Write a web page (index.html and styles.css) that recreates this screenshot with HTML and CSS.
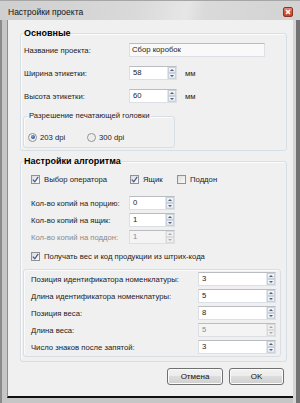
FILE: index.html
```html
<!DOCTYPE html>
<html lang="ru">
<head>
    <meta charset="UTF-8">
    <meta name="viewport" content="width=device-width, initial-scale=1.0">
    <title>Настройки проекта</title>
    <link rel="stylesheet" href="styles.css">
</head>
<body>
    <div class="window">
        <div class="titlebar">
            <span class="title">Настройки проекта</span>
            <span class="close">
                <svg width="6" height="6" viewBox="0 0 6 6"><path d="M1 1 L5 5 M5 1 L1 5" stroke="#fff" stroke-width="1.6"/></svg>
            </span>
        </div>

        <div class="client">
            <fieldset class="group group-main">
                <legend>Основные</legend>

                <div class="row">
                    <label class="label">Название проекта:</label>
                    <div class="textbox">Сбор коробок</div>
                </div>
                <div class="row">
                    <label class="label">Ширина этикетки:</label>
                    <div class="spin"><span class="value">58</span><span class="arrows"><span class="up"></span><span class="down"></span></span></div>
                    <span class="unit">мм</span>
                </div>
                <div class="row">
                    <label class="label">Высота этикетки:</label>
                    <div class="spin"><span class="value">60</span><span class="arrows"><span class="up"></span><span class="down"></span></span></div>
                    <span class="unit">мм</span>
                </div>

                <fieldset class="group group-dpi">
                    <legend>Разрешение печатающей головки</legend>
                    <div class="radios">
                        <span class="radio-item first"><span class="radio checked"></span>203 dpi</span>
                        <span class="radio-item"><span class="radio"></span>300 dpi</span>
                    </div>
                </fieldset>
            </fieldset>

            <fieldset class="group group-algo">
                <legend>Настройки алгоритма</legend>

                <div class="checks">
                    <span class="check-item w-operator"><span class="check checked"><svg width="7" height="7" viewBox="0 0 7 7"><path d="M0.8 3.6 L2.8 5.8 L6.2 0.9" fill="none" stroke="#4a5d90" stroke-width="1.3"/></svg></span>Выбор оператора</span>
                    <span class="check-item w-box"><span class="check checked"><svg width="7" height="7" viewBox="0 0 7 7"><path d="M0.8 3.6 L2.8 5.8 L6.2 0.9" fill="none" stroke="#4a5d90" stroke-width="1.3"/></svg></span>Ящик</span>
                    <span class="check-item"><span class="check"></span>Поддон</span>
                </div>

                <div class="row copies">
                    <label class="label">Кол-во копий на порцию:</label>
                    <div class="spin small"><span class="value">0</span><span class="arrows"><span class="up"></span><span class="down"></span></span></div>
                </div>
                <div class="row copies">
                    <label class="label">Кол-во копий на ящик:</label>
                    <div class="spin small"><span class="value">1</span><span class="arrows"><span class="up"></span><span class="down"></span></span></div>
                </div>
                <div class="row copies">
                    <label class="label disabled">Кол-во копий на поддон:</label>
                    <div class="spin small disabled"><span class="value">1</span><span class="arrows"><span class="up"></span><span class="down"></span></span></div>
                </div>

                <div class="checks single">
                    <span class="check-item"><span class="check checked"><svg width="7" height="7" viewBox="0 0 7 7"><path d="M0.8 3.6 L2.8 5.8 L6.2 0.9" fill="none" stroke="#4a5d90" stroke-width="1.3"/></svg></span>Получать вес и код продукции из штрих-кода</span>
                </div>

                <fieldset class="group group-barcode">
                    <div class="row bc">
                        <label class="label">Позиция идентификатора номенклатуры:</label>
                        <div class="spin wide"><span class="value">3</span><span class="arrows"><span class="up"></span><span class="down"></span></span></div>
                    </div>
                    <div class="row bc">
                        <label class="label">Длина идентификатора номенклатуры:</label>
                        <div class="spin wide"><span class="value">5</span><span class="arrows"><span class="up"></span><span class="down"></span></span></div>
                    </div>
                    <div class="row bc">
                        <label class="label">Позиция веса:</label>
                        <div class="spin wide"><span class="value">8</span><span class="arrows"><span class="up"></span><span class="down"></span></span></div>
                    </div>
                    <div class="row bc">
                        <label class="label">Длина веса:</label>
                        <div class="spin wide disabled"><span class="value">5</span><span class="arrows"><span class="up"></span><span class="down"></span></span></div>
                    </div>
                    <div class="row bc">
                        <label class="label">Число знаков после запятой:</label>
                        <div class="spin wide"><span class="value">3</span><span class="arrows"><span class="up"></span><span class="down"></span></span></div>
                    </div>
                </fieldset>
            </fieldset>

            <div class="buttons">
                <button type="button" class="btn btn-cancel">Отмена</button>
                <button type="button" class="btn btn-ok">OK</button>
            </div>
        </div>
    </div>
</body>
</html>
```

FILE: styles.css
```css
* {
    margin: 0;
    padding: 0;
    box-sizing: border-box;
}

body {
    width: 300px;
    height: 403px;
    overflow: hidden;
    font-family: 'Liberation Sans', Arial, sans-serif;
    font-size: 7.7px;
    color: #1b1b1b;
    background: #9c9c9c;
}

/* window frame */
.window {
    width: 300px;
    height: 403px;
    display: flex;
    flex-direction: column;
    padding: 0 7px 5px 7px;
    background: linear-gradient(to right,
        #8b8b8b 0, #8b8b8b 2px,
        #c6c6c6 2px, #c6c6c6 293px,
        #d6d6d6 293px, #d6d6d6 296px,
        #737373 296px, #737373 300px);
}

.titlebar {
    height: 20px;
    margin: 0 -7px;
    padding: 0 7px 0 8px;
    display: flex;
    align-items: center;
    justify-content: space-between;
    background: linear-gradient(100deg, #cfcfcf 0%, #d9d9d9 45%, #e6e6e6 62%, #dadada 68%, #d2d2d2 100%);
    border-top: 1px solid #a6a6a6;
}

.title {
    font-size: 8.5px;
    color: #111;
    margin-top: 3px;
}

.close {
    width: 10px;
    height: 10px;
    margin-top: 2px;
    display: flex;
    align-items: center;
    justify-content: center;
    border: 1px solid #8d3322;
    border-radius: 2px;
    background: linear-gradient(#e8897a 0%, #d6573f 50%, #c4401f 100%);
}

.client {
    flex: 1;
    display: flex;
    flex-direction: column;
    background: #f0f0f0;
    border-left: 1px solid #8e8e8e;
    border-bottom: 2px solid #111;
}

/* group boxes */
.group {
    border: 1px solid #d5dfe5;
    border-radius: 3px;
    box-shadow: inset 1px 1px 0 #fbfbfb;
}

.group legend {
    font-size: 9px;
    font-weight: bold;
    line-height: 11px;
    color: #000;
}

.group-main {
    margin: 8px 6px 0 12px;
    padding: 4px 3px 2px 3px;
}

.group-algo {
    margin: 5px 6px 0 12px;
    padding: 7px 3px 4px 3px;
}

.group-dpi {
    width: 152px;
    margin: -1px 0 0 -1px;
    padding: 11px 0 5px 4px;
}

.group-dpi legend {
    font-size: 7.7px;
    font-weight: normal;
    line-height: 10px;
    padding: 0 1px;
    color: #1b1b1b;
}

.group-barcode {
    width: 258px;
    margin: 8px 0 0 -1px;
    padding: 2px 4px 2px 7px;
}

/* rows */
.row {
    display: flex;
    align-items: center;
    height: 14px;
    margin-bottom: 9px;
}

.label {
    flex: 0 0 105px;
}

.label.disabled {
    color: #8a8a8a;
}

.copies {
    margin: 0 0 3px 7px;
}

.copies .label {
    flex-basis: 98px;
}

.checks + .copies {
    margin-top: 12px;
}

.bc {
    margin-bottom: 3px;
}

.bc:last-child {
    margin-bottom: 0;
}

.bc .label {
    flex-basis: 167px;
}

.unit {
    margin-left: 8px;
}

/* inputs */
.textbox {
    width: 136px;
    height: 14px;
    line-height: 12px;
    padding-left: 2px;
    background: #f9f9f9;
    border: 1px solid #dcdfe3;
    border-top-color: #b9bcc1;
}

.spin {
    width: 48px;
    height: 14px;
    display: flex;
    background: #fff;
    border: 1px solid #dcdfe3;
    border-top-color: #b9bcc1;
}

.spin.small {
    width: 46px;
}

.spin.wide {
    width: 78px;
}

.spin .value {
    flex: 1;
    line-height: 12px;
    padding-left: 3px;
}

.spin.disabled {
    background: #f4f4f4;
    color: #8a8a8a;
}

.arrows {
    width: 9px;
    display: flex;
    flex-direction: column;
    border-left: 1px solid #e4e7ea;
}

.arrows span {
    flex: 1;
    display: flex;
    align-items: center;
    justify-content: center;
    background: linear-gradient(#f6f7f9, #e2e6ea);
    border: 1px solid #c9d1da;
}

.arrows .up::before,
.arrows .down::before {
    content: '';
    border-left: 2px solid transparent;
    border-right: 2px solid transparent;
}

.arrows .up::before {
    border-bottom: 2px solid #4f6282;
}

.arrows .down::before {
    border-top: 2px solid #4f6282;
}

.spin.disabled .arrows span {
    background: #f0f0f0;
    border-color: #d8dadc;
}

.spin.disabled .arrows .up::before {
    border-bottom-color: #a9a9a9;
}

.spin.disabled .arrows .down::before {
    border-top-color: #a9a9a9;
}

/* radios & checkboxes */
.radios,
.checks {
    display: flex;
    align-items: center;
    height: 10px;
}

.checks {
    margin-left: 7px;
}

.checks.single {
    margin-top: 7px;
}

.radio-item,
.check-item {
    display: flex;
    align-items: center;
}

.radio-item.first {
    width: 59px;
}

.radio {
    width: 9px;
    height: 9px;
    margin-right: 3px;
    border-radius: 50%;
    border: 1px solid #8f9194;
    background: radial-gradient(circle, #e7e7e7 0, #f8f8f8 100%);
    display: flex;
    align-items: center;
    justify-content: center;
}

.radio.checked::before {
    content: '';
    width: 4px;
    height: 4px;
    border-radius: 50%;
    background: radial-gradient(circle at 40% 35%, #7fa6d6 0, #274b84 80%);
}

.w-operator {
    width: 99px;
}

.w-box {
    width: 47px;
}

.check {
    width: 9px;
    height: 9px;
    margin-right: 4px;
    display: flex;
    align-items: center;
    justify-content: center;
    border: 1px solid #8f9194;
    background: linear-gradient(135deg, #dcdcdc 0, #fbfbfb 100%);
}

/* buttons */
.buttons {
    display: flex;
    justify-content: flex-end;
    gap: 6px;
    margin: 6px 9px 0 0;
}

.btn {
    width: 56px;
    height: 17px;
    font-family: inherit;
    font-size: 8px;
    color: #111;
    border: 1px solid #707070;
    border-radius: 3px;
    background: linear-gradient(#f2f2f2 0%, #ebebeb 50%, #dddddd 50%, #cfcfcf 100%);
    box-shadow: inset 0 0 0 1px #fbfbfb;
}

.btn-ok {
    width: 55px;
}
```
